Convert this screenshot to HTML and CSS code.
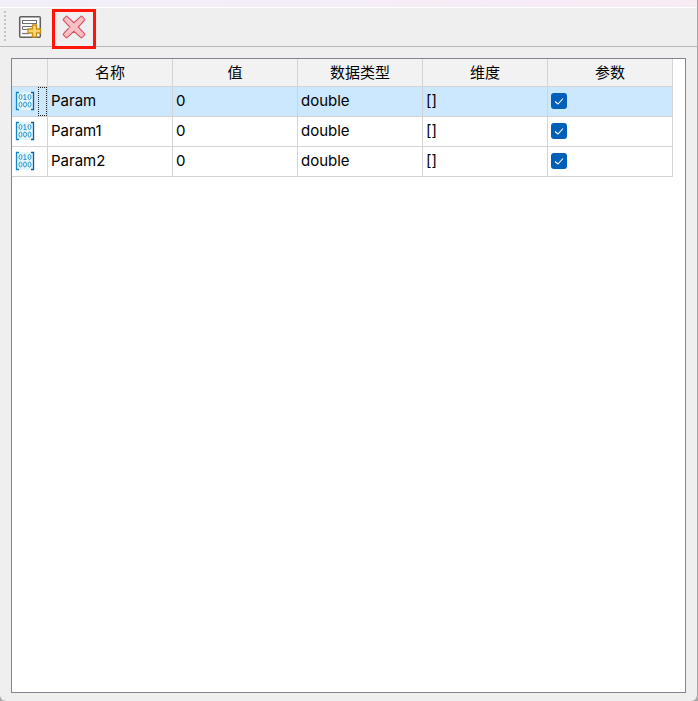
FILE: index.html
```
<!DOCTYPE html>
<html lang="zh-CN">
<head>
<meta charset="utf-8">
<title>参数</title>
<link rel="stylesheet" href="styles.css">
</head>
<body>
<svg class="defs" aria-hidden="true">
  <symbol id="matrix" viewBox="0 0 20 20">
    <rect x="2" y="1" width="16" height="18" fill="#e2f5fc"/>
    <path d="M4 1.5H1.5V18.5H4" fill="none" stroke="#1686c4" stroke-width="1.3"/>
    <path d="M16 1.5H18.5V18.5H16" fill="none" stroke="#0c5d9c" stroke-width="1.3"/>
    <g fill="none" stroke="#3299cc" stroke-width="1">
      <ellipse cx="5.5" cy="6" rx="1.5" ry="2.5"/>
      <path d="M8.5 4.5L10 3.5V8.5M8.5 8.5H11.5"/>
      <ellipse cx="14.5" cy="6" rx="1.5" ry="2.5"/>
      <ellipse cx="5.5" cy="13.5" rx="1.5" ry="2.5"/>
      <ellipse cx="10" cy="13.5" rx="1.5" ry="2.5"/>
      <ellipse cx="14.5" cy="13.5" rx="1.5" ry="2.5"/>
    </g>
  </symbol>
</svg>
<div class="window">
  <div class="titlebar"></div>
  <div class="toolbar" role="toolbar">
    <span class="grip"></span>
    <button class="tool" type="button" aria-label="添加">
      <svg width="24" height="24" viewBox="0 0 24 24">
        <rect x="1.7" y="1.7" width="20.6" height="20.6" rx="1" fill="#fafafa" stroke="#606060" stroke-width="1.5"/>
        <path d="M4 18.5H11" stroke="#777" stroke-width="1.2"/>
        <rect x="4.5" y="5.5" width="14" height="3" fill="#fff" stroke="#707070"/>
        <path d="M10 14.5H4.5V11.5H14" fill="none" stroke="#707070"/>
        <path d="M14.5 10H18.5V14H22.5V18H18.5V22H14.5V18H10V14H14.5Z" fill="#fbd36b" stroke="#c68f19" stroke-width="1.3" stroke-linejoin="round"/>
      </svg>
    </button>
    <button class="tool marked" type="button" aria-label="删除">
      <svg width="24" height="24" viewBox="0 0 24 24">
        <path d="M4.6 1.9L12 8.8L19.4 1.9L22.1 4.6L15.2 12L22.1 19.4L19.4 22.1L12 15.2L4.6 22.1L1.9 19.4L8.8 12L1.9 4.6Z" fill="#d05062" stroke="#d05062" stroke-width="2.6" stroke-linejoin="round"/>
        <path d="M4.6 1.9L12 8.8L19.4 1.9L22.1 4.6L15.2 12L22.1 19.4L19.4 22.1L12 15.2L4.6 22.1L1.9 19.4L8.8 12L1.9 4.6Z" fill="#fbc0c6" stroke="#fbc0c6" stroke-width="0.6" stroke-linejoin="round"/>
      </svg>
    </button>
  </div>
  <main class="content">
    <div class="view">
      <table>
        <colgroup><col class="c-icon"><col class="c"><col class="c"><col class="c"><col class="c"><col class="c"></colgroup>
        <thead>
          <tr><th></th><th>名称</th><th>值</th><th>数据类型</th><th>维度</th><th>参数</th></tr>
        </thead>
        <tbody>
          <tr class="selected"><td class="kind"><div class="kind-row"><svg class="matrix"><use href="#matrix"/></svg><span class="focus"></span></div></td><td>Param</td><td>0</td><td>double</td><td>[]</td><td><input type="checkbox" checked aria-label="Param 参数"></td></tr>
          <tr><td class="kind"><div class="kind-row"><svg class="matrix"><use href="#matrix"/></svg></div></td><td>Param1</td><td>0</td><td>double</td><td>[]</td><td><input type="checkbox" checked aria-label="Param1 参数"></td></tr>
          <tr><td class="kind"><div class="kind-row"><svg class="matrix"><use href="#matrix"/></svg></div></td><td>Param2</td><td>0</td><td>double</td><td>[]</td><td><input type="checkbox" checked aria-label="Param2 参数"></td></tr>
        </tbody>
      </table>
    </div>
  </main>
</div>
</body>
</html>
```
FILE: styles.css
```
* { box-sizing: border-box; }
body {
  margin: 0;
  background: #a8a8a8;
  color: #000;
  font: 15px/20px Inter, "Noto Sans CJK SC", sans-serif;
}
.defs { position: absolute; width: 0; height: 0; }
.window {
  display: flex;
  flex-direction: column;
  min-height: 100vh;
  margin-right: 1px;
  background: #efefef;
  border-radius: 0 0 6px 6px;
}
.titlebar {
  height: 8px;
  background: linear-gradient(90deg, #f2eff8, #f8ebf6);
  border-bottom: 1px solid #fff;
}
.toolbar {
  display: flex;
  align-items: center;
  height: 39px;
  padding-left: 4px;
  border-bottom: 1px solid #b8b8b8;
}
.grip {
  width: 2px;
  height: 32px;
  margin-right: 6px;
  background: repeating-linear-gradient(#c4c4c4 0 2px, transparent 2px 4px);
}
.tool {
  display: grid;
  place-items: center;
  width: 36px;
  height: 38px;
  padding: 0;
  border: 0;
  background: none;
}
.marked {
  width: 38px;
  height: 34px;
  margin: 3px 0 0 7px;
  padding-bottom: 3px;
  outline: 3px solid #ff1408;
}
.content {
  display: flex;
  flex: 1;
  padding: 11px 11px 8px;
}
.view {
  flex: 1;
  background: #fff;
  border: 1px solid #82858f;
}
table {
  table-layout: fixed;
  width: 661px;
  border-collapse: separate;
  border-spacing: 0;
}
.c-icon { width: 36px; }
.c { width: 125px; }
th, td {
  padding: 0 3px;
  border-right: 1px solid #d4d4d4;
  border-bottom: 1px solid #d4d4d4;
  text-align: left;
  font-weight: 400;
}
th { height: 28px; background: #f2f2f2; text-align: center; }
td { height: 30px; padding-bottom: 2px; }
.selected td { background: #cce8ff; }
td.kind { padding: 0; }
.kind-row {
  display: flex;
  align-items: center;
  justify-content: space-between;
  height: 29px;
  padding-left: 3px;
}
.matrix { width: 20px; height: 20px; margin-bottom: 2px; }
.focus { width: 9px; height: 29px; border: 1px dotted #222; }
input {
  display: block;
  appearance: none;
  width: 16px;
  height: 16px;
  margin: 0;
  border-radius: 3px;
  background: #005fb8;
}
input:checked::before {
  content: "";
  display: block;
  width: 16px;
  height: 16px;
  background: url("data:image/svg+xml,%3Csvg xmlns='http://www.w3.org/2000/svg' viewBox='0 0 16 16'%3E%3Cpath d='M4 8.5L7 11L12 5.5' fill='none' stroke='white' stroke-width='1.1'/%3E%3C/svg%3E");
}
```
